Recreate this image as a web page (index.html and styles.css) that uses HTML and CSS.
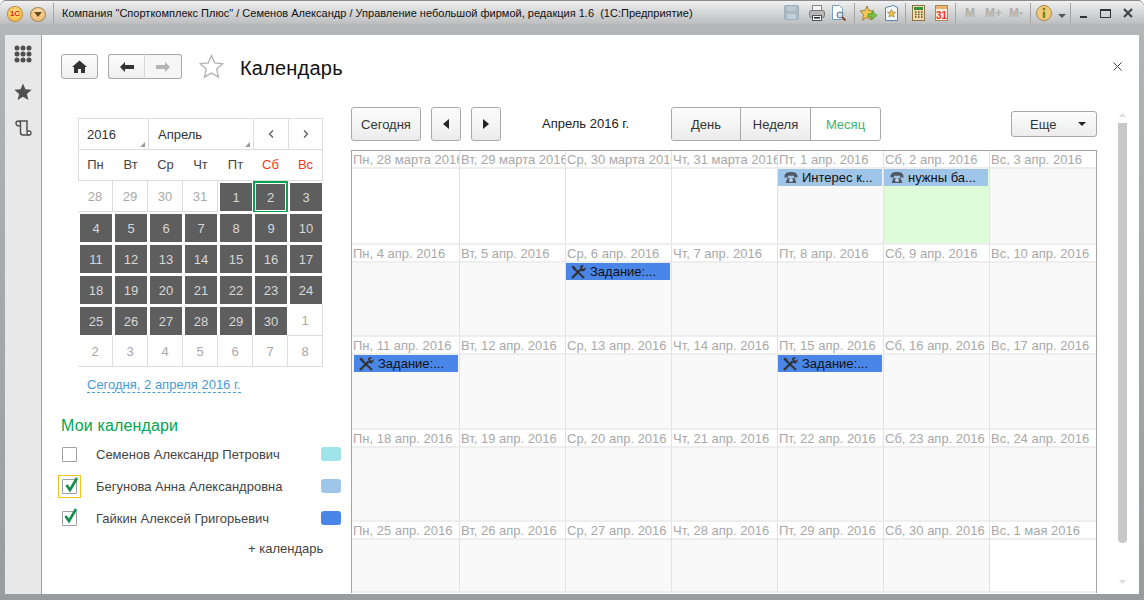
FILE: index.html
```html
<!DOCTYPE html>
<html lang="ru">
<head>
<meta charset="utf-8">
<title>Календарь</title>
<link rel="stylesheet" href="styles.css">
</head>
<body>
<div class="window">
  <header class="titlebar">
    <div class="tb-logo">1С</div>
    <div class="tb-menu"><svg width="8" height="5" viewBox="0 0 8 5"><path d="M0 0h8L4 5z" fill="#6b4a1a"/></svg></div>
    <div class="tb-sep tb-sep-first"></div>
    <div class="tb-title">Компания "Спорткомплекс Плюс" / Семенов Александр / Управление небольшой фирмой, редакция 1.6&nbsp; (1С:Предприятие)</div>
    <div class="tb-tools">
      <svg class="ti" width="16" height="16" viewBox="0 0 16 16"><rect x=".5" y=".5" width="14" height="14" rx="1" fill="#a9bac6" stroke="#9fb0bc"/><rect x="3" y="1" width="9" height="5" fill="#bcc8d0"/><rect x="3" y="9" width="9" height="5" fill="#c4ced6"/></svg>
      <svg class="ti ti-print" width="16" height="16" viewBox="0 0 16 16"><rect x="3.500" y=".5" width="9" height="5" fill="#f4f4f4" stroke="#888"/><rect x=".5" y="5.500" width="15" height="7" rx="2" fill="#b8b8b8" stroke="#777"/><rect x="3.500" y="10.500" width="9" height="5" fill="#fff" stroke="#555"/><rect x="5" y="12" width="6" height="1.500" fill="#222"/></svg>
      <svg class="ti ti-prev" width="16" height="16" viewBox="0 0 16 16"><path d="M1.500.5h7l3 3v11h-10z" fill="#fff" stroke="#7a9cc0"/><circle cx="9" cy="10" r="3" fill="#cfe3f2" stroke="#5a6d80"/><path d="M11 12l3.500 3.500" stroke="#7b4a20" stroke-width="2"/></svg>
      <span class="tb-sep"></span>
      <svg class="ti ti-fav" width="17" height="16" viewBox="0 0 17 16"><path d="M7 1l2 4.500 5 .5-3.500 3.500L11.500 15 7 12.500 2.500 15l1-5.500L0 6l5-.5z" fill="#f3c553" stroke="#8f7326" stroke-width=".8"/><path d="M8 9h4V6.500l5 4-5 4V12H8z" fill="#7cc24a" stroke="#4f8a2a" stroke-width=".7"/></svg>
      <svg class="ti ti-doc" width="13" height="16" viewBox="0 0 13 16"><path d="M.5 2.500l8-2 4 2v13h-12z" fill="#f2f5f8" stroke="#5f84a8"/><path d="M6.500 4.500l1.200 2.500 2.800.3-2 2 .5 2.700-2.500-1.300L4 12l.5-2.700-2-2 2.800-.3z" fill="#eec253" stroke="#8d7028" stroke-width=".6"/></svg>
      <span class="tb-sep"></span>
      <svg class="ti ti-calc" width="13" height="16" viewBox="0 0 13 16"><rect x=".5" y=".5" width="12" height="15" fill="#f4dca6" stroke="#8a744a"/><rect x="2" y="2" width="9" height="3" fill="#3f8f3f"/><path d="M3 7h1.500M6 7h1.500M9 7h1.500M3 9.500h1.500M6 9.500h1.500M9 9.500h1.500M3 12h1.500M6 12h1.500M9 12h1.500" stroke="#5a4a2a" stroke-width="1.400"/></svg>
      <svg class="ti ti-date" width="13" height="16" viewBox="0 0 13 16"><rect x=".5" y=".5" width="12" height="15" fill="#f8f0df" stroke="#a08a60"/><rect x="1" y="1" width="11" height="3" fill="#e9b46a"/><text x="6.500" y="14" class="ti-31">31</text></svg>
      <span class="tb-sep"></span>
      <span class="tm tm-m">M</span><span class="tm tm-mp">M+</span><span class="tm tm-mm">M-</span>
      <span class="tb-sep tb-sep-m"></span>
      <svg class="ti ti-info" width="16" height="16" viewBox="0 0 16 16"><circle cx="8" cy="8" r="7.500" fill="#f4c878" stroke="#a88a50"/><circle cx="8" cy="4" r="1.300" fill="#5f8f1f"/><rect x="6.800" y="6.500" width="2.400" height="6.500" rx=".5" fill="#5f8f1f"/></svg>
      <svg class="ti ti-drop" width="8" height="5" viewBox="0 0 8 5"><path d="M0 0h8L4 4z" fill="#555"/></svg>
      <span class="tb-sep tb-sep-w"></span>
      <span class="wb wb-min"></span>
      <span class="wb wb-max"></span>
      <svg class="wb-x" width="10" height="10" viewBox="0 0 10 10"><path d="M1 1l8 8M9 1l-8 8" stroke="#444" stroke-width="2.200"/></svg>
    </div>
  </header>

  <div class="client">
    <nav class="sidebar">
      <svg class="si si-grid" width="18" height="18" viewBox="0 0 18 18"><g fill="#505050"><circle cx="3" cy="3" r="2.500"/><circle cx="9" cy="3" r="2.500"/><circle cx="15" cy="3" r="2.500"/><circle cx="3" cy="9" r="2.500"/><circle cx="9" cy="9" r="2.500"/><circle cx="15" cy="9" r="2.500"/><circle cx="3" cy="15" r="2.500"/><circle cx="9" cy="15" r="2.500"/><circle cx="15" cy="15" r="2.500"/></g></svg>
      <svg class="si si-star" width="18" height="18" viewBox="0 0 18 18"><path d="M9 .5l2.400 5.800 6.300.5-4.800 4.100 1.500 6.100L9 13.700l-5.400 3.300 1.500-6.100L.3 6.800l6.300-.5z" fill="#505050"/></svg>
      <svg class="si si-scroll" width="17" height="16" viewBox="0 0 17 16"><path d="M5 6C2.500 6 1 5 1 3.200S2.200 1 3.500 1H12V11.500M3.500 1C5 1 5.500 2 5.500 3.500V12.500C5.500 14 6.500 15 8 15H14.500" fill="none" stroke="#505050" stroke-width="1.500"/><circle cx="14" cy="13" r="2" fill="#fff" stroke="#505050" stroke-width="1.300"/></svg>
    </nav>

    <main class="content">
      <div class="page-head">
        <button class="btn btn-home"><svg width="15" height="13" viewBox="0 0 15 13"><path d="M7.500.5L15 7h-2v6H9V9H6v4H2V7H0z" fill="#333"/></svg></button>
        <div class="nav-pair">
          <button class="btn btn-nav"><svg width="14" height="10" viewBox="0 0 14 10"><path d="M0 5l5-5v3h9v4H5v3z" fill="#333"/></svg></button>
          <button class="btn btn-nav btn-off"><svg width="14" height="10" viewBox="0 0 14 10"><path d="M14 5L9 0v3H0v4h9v3z" fill="#b4b4b4"/></svg></button>
        </div>
        <svg class="fav-star" width="25" height="25" viewBox="0 0 25 25"><path d="M12.500 1.500l3.200 7.500 8.100.7-6.100 5.400 1.800 8-7-4.200-7 4.200 1.800-8L1.200 9.700l8.100-.7z" fill="#fff" stroke="#b0b0b0" stroke-width="1.300"/></svg>
        <h1 class="page-title">Календарь</h1>
        <svg class="page-close" width="9" height="9" viewBox="0 0 9 9"><path d="M.5.500l8 8M8.500.500l-8 8" stroke="#444" stroke-width="1"/></svg>
      </div>

      <div class="columns">
        <aside class="left">
          <div class="mini">
            <div class="mini-top">
              <div class="mt mt-year">2016<i class="corner"></i></div>
              <div class="mt mt-month">Апрель<i class="corner"></i></div>
              <div class="mt mt-arrow"><svg width="6" height="8" viewBox="0 0 6 8"><path d="M5 .5L1.500 4 5 7.500" fill="none" stroke="#555" stroke-width="1.200"/></svg></div>
              <div class="mt mt-arrow mt-last"><svg width="6" height="8" viewBox="0 0 6 8"><path d="M1 .5L4.500 4 1 7.500" fill="none" stroke="#555" stroke-width="1.200"/></svg></div>
            </div>
            <div class="mini-grid">
              <div class="wd">Пн</div><div class="wd">Вт</div><div class="wd">Ср</div><div class="wd">Чт</div><div class="wd">Пт</div><div class="wd red">Сб</div><div class="wd red">Вс</div>
              <div class="d out">28</div><div class="d out">29</div><div class="d out">30</div><div class="d out">31</div><div class="d on">1</div><div class="d on cur">2</div><div class="d on">3</div>
              <div class="d on">4</div><div class="d on">5</div><div class="d on">6</div><div class="d on">7</div><div class="d on">8</div><div class="d on">9</div><div class="d on">10</div>
              <div class="d on">11</div><div class="d on">12</div><div class="d on">13</div><div class="d on">14</div><div class="d on">15</div><div class="d on">16</div><div class="d on">17</div>
              <div class="d on">18</div><div class="d on">19</div><div class="d on">20</div><div class="d on">21</div><div class="d on">22</div><div class="d on">23</div><div class="d on">24</div>
              <div class="d on">25</div><div class="d on">26</div><div class="d on">27</div><div class="d on">28</div><div class="d on">29</div><div class="d on">30</div><div class="d out">1</div>
              <div class="d out">2</div><div class="d out">3</div><div class="d out">4</div><div class="d out">5</div><div class="d out">6</div><div class="d out">7</div><div class="d out">8</div>
            </div>
          </div>
          <a class="today-link">Сегодня, 2 апреля 2016 г.</a>
          <h2 class="my-cal">Мои календари</h2>
          <ul class="cal-list">
            <li class="cal-row"><span class="cb-wrap"><span class="cb"></span></span><span class="cal-name">Семенов Александр Петрович</span><span class="swatch sw-teal"></span></li>
            <li class="cal-row"><span class="cb-wrap focus"><span class="cb"></span><svg class="tick" width="17" height="17" viewBox="0 0 17 17"><path d="M3.500 9l3.500 5 7-12" fill="none" stroke="#0f8f4a" stroke-width="2.600"/></svg></span><span class="cal-name">Бегунова Анна Александровна</span><span class="swatch sw-light"></span></li>
            <li class="cal-row"><span class="cb-wrap"><span class="cb"></span><svg class="tick" width="17" height="17" viewBox="0 0 17 17"><path d="M3.500 9l3.500 5 7-12" fill="none" stroke="#0f8f4a" stroke-width="2.600"/></svg></span><span class="cal-name">Гайкин Алексей Григорьевич</span><span class="swatch sw-blue"></span></li>
          </ul>
          <a class="add-cal">+ календарь</a>
        </aside>

        <section class="right">
          <div class="toolbar">
            <button class="tbtn tbtn-today">Сегодня</button>
            <button class="tbtn tbtn-sq"><svg width="6" height="10" viewBox="0 0 6 10"><path d="M6 0v10L0 5z" fill="#222"/></svg></button>
            <button class="tbtn tbtn-sq"><svg width="6" height="10" viewBox="0 0 6 10"><path d="M0 0v10l6-5z" fill="#222"/></svg></button>
            <span class="period">Апрель 2016 г.</span>
            <div class="seg">
              <button class="seg-b seg-day">День</button>
              <button class="seg-b seg-week">Неделя</button>
              <button class="seg-b seg-month">Месяц</button>
            </div>
            <button class="more">Еще<svg width="8" height="4" viewBox="0 0 8 4"><path d="M0 0h8L4 4z" fill="#222"/></svg></button>
          </div>

          <div class="month">
            <div class="c out first"><div class="h">Пн, 28 марта 2016</div></div>
            <div class="c out"><div class="h">Вт, 29 марта 2016</div></div>
            <div class="c out"><div class="h">Ср, 30 марта 2016</div></div>
            <div class="c out"><div class="h">Чт, 31 марта 2016</div></div>
            <div class="c"><div class="h">Пт, 1 апр. 2016</div><div class="ev ev-light"><svg class="ph" width="14" height="13" viewBox="0 0 14 13"><path d="M.5 5C1 1.500 4 1 7 1s6 .5 6.500 4v1.500H10V4.800H4v1.700H.5z" fill="#4f5a64"/><path d="M3.500 7h7l2 5h-11z" fill="#4f5a64"/><circle cx="7" cy="9" r="2" fill="#b8cfe4"/></svg>Интерес к...</div></div>
            <div class="c today"><div class="h">Сб, 2 апр. 2016</div><div class="ev ev-light"><svg class="ph" width="14" height="13" viewBox="0 0 14 13"><path d="M.5 5C1 1.500 4 1 7 1s6 .5 6.500 4v1.500H10V4.800H4v1.700H.5z" fill="#4f5a64"/><path d="M3.500 7h7l2 5h-11z" fill="#4f5a64"/><circle cx="7" cy="9" r="2" fill="#b8cfe4"/></svg>нужны ба...</div></div>
            <div class="c lastc"><div class="h">Вс, 3 апр. 2016</div></div>

            <div class="c first"><div class="h">Пн, 4 апр. 2016</div></div>
            <div class="c"><div class="h">Вт, 5 апр. 2016</div></div>
            <div class="c"><div class="h">Ср, 6 апр. 2016</div><div class="ev ev-blue"><svg class="tool" width="15" height="14" viewBox="0 0 15 14"><path d="M1 13L9.500 4.500" stroke="#333" stroke-width="2.400"/><path d="M9 1.500C10 .3 12 0 13 .6L11 2.600 12.500 4 14.500 2C15 3.500 14.500 5 13 6 12 6.500 11 6.500 10 6z" fill="#333"/><path d="M3 3.500L13 13" stroke="#333" stroke-width="2"/><path d="M.5 2L2 .5 5 3 3 5z" fill="#333"/></svg>Задание:...</div></div>
            <div class="c"><div class="h">Чт, 7 апр. 2016</div></div>
            <div class="c"><div class="h">Пт, 8 апр. 2016</div></div>
            <div class="c"><div class="h">Сб, 9 апр. 2016</div></div>
            <div class="c lastc"><div class="h">Вс, 10 апр. 2016</div></div>

            <div class="c first"><div class="h">Пн, 11 апр. 2016</div><div class="ev ev-blue"><svg class="tool" width="15" height="14" viewBox="0 0 15 14"><path d="M1 13L9.500 4.500" stroke="#333" stroke-width="2.400"/><path d="M9 1.500C10 .3 12 0 13 .6L11 2.600 12.500 4 14.500 2C15 3.500 14.500 5 13 6 12 6.500 11 6.500 10 6z" fill="#333"/><path d="M3 3.500L13 13" stroke="#333" stroke-width="2"/><path d="M.5 2L2 .5 5 3 3 5z" fill="#333"/></svg>Задание:...</div></div>
            <div class="c"><div class="h">Вт, 12 апр. 2016</div></div>
            <div class="c"><div class="h">Ср, 13 апр. 2016</div></div>
            <div class="c"><div class="h">Чт, 14 апр. 2016</div></div>
            <div class="c"><div class="h">Пт, 15 апр. 2016</div><div class="ev ev-blue"><svg class="tool" width="15" height="14" viewBox="0 0 15 14"><path d="M1 13L9.500 4.500" stroke="#333" stroke-width="2.400"/><path d="M9 1.500C10 .3 12 0 13 .6L11 2.600 12.500 4 14.500 2C15 3.500 14.500 5 13 6 12 6.500 11 6.500 10 6z" fill="#333"/><path d="M3 3.500L13 13" stroke="#333" stroke-width="2"/><path d="M.5 2L2 .5 5 3 3 5z" fill="#333"/></svg>Задание:...</div></div>
            <div class="c"><div class="h">Сб, 16 апр. 2016</div></div>
            <div class="c lastc"><div class="h">Вс, 17 апр. 2016</div></div>

            <div class="c first"><div class="h">Пн, 18 апр. 2016</div></div>
            <div class="c"><div class="h">Вт, 19 апр. 2016</div></div>
            <div class="c"><div class="h">Ср, 20 апр. 2016</div></div>
            <div class="c"><div class="h">Чт, 21 апр. 2016</div></div>
            <div class="c"><div class="h">Пт, 22 апр. 2016</div></div>
            <div class="c"><div class="h">Сб, 23 апр. 2016</div></div>
            <div class="c lastc"><div class="h">Вс, 24 апр. 2016</div></div>

            <div class="c first"><div class="h">Пн, 25 апр. 2016</div></div>
            <div class="c"><div class="h">Вт, 26 апр. 2016</div></div>
            <div class="c"><div class="h">Ср, 27 апр. 2016</div></div>
            <div class="c"><div class="h">Чт, 28 апр. 2016</div></div>
            <div class="c"><div class="h">Пт, 29 апр. 2016</div></div>
            <div class="c"><div class="h">Сб, 30 апр. 2016</div></div>
            <div class="c lastc out"><div class="h">Вс, 1 мая 2016</div></div>
          </div>

          <div class="scroll">
            <svg width="7" height="4" viewBox="0 0 7 4"><path d="M3.500 0L7 4H0z" fill="#ddd"/></svg>
            <div class="thumb"></div>
            <svg width="7" height="4" viewBox="0 0 7 4"><path d="M3.500 4L7 0H0z" fill="#ddd"/></svg>
          </div>
        </section>
      </div>
    </main>
  </div>
</div>
</body>
</html>
```

FILE: styles.css
```css
* { box-sizing: border-box; }
html, body { margin: 0; padding: 0; }
body { width: 1144px; height: 600px; overflow: hidden; background: #fff; font-family: "Liberation Sans", Arial, sans-serif; font-size: 13px; color: #333; }
button { font-family: inherit; margin: 0; padding: 0; cursor: default; }
h1, h2, ul { margin: 0; padding: 0; }
ul { list-style: none; }

.window { width: 1144px; height: 600px; display: flex; flex-direction: column; background: linear-gradient(#b4b5b7, #9a9b9d); border-radius: 6px 6px 0 0; }

/* title bar */
.titlebar { height: 35px; flex: none; display: flex; align-items: flex-start; padding: 0 11px 0 8px; border-radius: 6px 6px 0 0; border-top: 1px solid #8a8a8a; background: linear-gradient(#f1f1f1 0, #d8d9da 10px, #bfc0c2 22px, #b5b6b8 24px, #b4b5b7 35px); }
.tb-logo { width: 14px; height: 14px; margin-top: 6px; border-radius: 50%; background: radial-gradient(circle at 50% 40%, #ffe98a, #f4b53a 80%); box-shadow: 0 0 0 1px #b98a3a; color: #d8261c; font: bold 8px/14px "Liberation Sans", sans-serif; text-align: center; flex: none; }
.tb-menu { width: 16px; height: 15px; margin: 6px 0 0 8px; border-radius: 50%; background: radial-gradient(circle at 50% 30%, #fbe0b0, #eeb060); border: 1px solid #a98a5a; display: flex; align-items: center; justify-content: center; flex: none; }
.tb-sep { width: 1px; height: 20px; background: #a4a4a4; flex: none; }
.tb-sep-first { margin: 2px 0 0 7px; }
.tb-title { margin: 4px 0 0 8px; font-size: 11px; line-height: 17px; color: #111; white-space: nowrap; letter-spacing: .01px; flex: none; }
.tb-tools { display: flex; align-items: center; height: 24px; margin-left: auto; flex: none; }
.ti { flex: none; display: block; }
.ti-print { margin-left: 9px; }
.ti-prev { margin-left: 6px; }
.tb-tools .tb-sep { margin-left: 7px; }
.ti-fav { margin-left: 5px; }
.ti-doc { margin-left: 8px; }
.ti-calc { margin-left: 6px; }
.ti-date { margin-left: 10px; }
.ti-31 { font: bold 10px "Liberation Sans", sans-serif; fill: #e8331c; text-anchor: middle; }
.tm { font: bold 12px/14px "Liberation Sans", sans-serif; color: #b3aeaa; }
.tm-m { margin-left: 9px; }
.tm-mp { margin-left: 10px; }
.tm-mm { margin-left: 7px; }
.tb-tools .tb-sep-m { margin-left: 7px; }
.ti-info { margin-left: 5px; }
.ti-drop { margin: 6px 0 0 6px; }
.tb-tools .tb-sep-w { margin-left: 4px; }
.wb { flex: none; display: block; }
.wb-min { width: 7px; height: 2px; background: #333; margin: 8px 0 0 9px; }
.wb-max { width: 11px; height: 9px; border: 1px solid #333; border-top-width: 2px; margin-left: 13px; }
.wb-x { margin-left: 12px; flex: none; }

/* client */
.client { flex: none; height: 559px; margin: 0 5px; display: flex; background: #fff; }
.sidebar { width: 37px; flex: none; background: #e8e8e8; border-right: 1px solid #a0a0a0; display: flex; flex-direction: column; align-items: center; padding-top: 10px; }
.si { display: block; flex: none; }
.si-star { margin-top: 20px; }
.si-scroll { margin-top: 19px; }
.content { flex: 1; min-width: 0; display: flex; flex-direction: column; }

/* page head */
.page-head { height: 72px; flex: none; display: flex; align-items: flex-start; padding: 19px 0 0 19px; }
.btn { background: linear-gradient(#fdfdfd, #eee); border: 1px solid #a8a8a8; height: 25px; display: flex; align-items: center; justify-content: center; }
.btn-home { width: 37px; border-radius: 3px; }
.nav-pair { display: flex; margin-left: 10px; }
.btn-nav { width: 37px; border-radius: 3px 0 0 3px; border-right: 1px solid #d8d8d8; }
.btn-off { border-radius: 0 3px 3px 0; border-left: 0; border-right: 1px solid #a8a8a8; background: #f6f6f6; }
.fav-star { margin-left: 17px; display: block; flex: none; }
.page-title { margin: 0 0 0 16px; font-weight: normal; font-size: 20px; letter-spacing: .2px; line-height: 28px; color: #111; }
.page-close { margin: 8px 17px 0 auto; flex: none; }

.columns { flex: 1; display: flex; min-height: 0; }

/* left column */
.left { width: 309px; flex: none; display: flex; flex-direction: column; padding: 11px 0 0 19px; }
.mini { width: 245px; margin-left: 17px; border: 1px solid #ddd; flex: none; }
.mini-top { display: flex; height: 31px; border-bottom: 1px solid #ddd; }
.mt { position: relative; border-right: 1px solid #ddd; display: flex; align-items: center; height: 30px; font-size: 13px; color: #333; }
.mt-year { width: 70px; padding-left: 8px; }
.mt-month { width: 105px; padding-left: 9px; }
.mt-arrow { width: 35px; justify-content: center; }
.mt-last { border-right: 0; width: 33px; }
.corner { position: absolute; right: 3px; bottom: 2px; width: 0; height: 0; border-left: 5px solid transparent; border-bottom: 5px solid #999; }
.mini-grid { display: grid; grid-template-columns: repeat(7, 35px); grid-auto-rows: 31px; margin: 0 -1px -1px -1px; }
.wd { display: flex; align-items: center; justify-content: center; border-bottom: 1px solid #ddd; color: #444; font-size: 13px; padding-bottom: 1px; }
.red { color: #f03a17; }
.d { display: flex; align-items: center; justify-content: center; font-size: 13px; border: 1px solid #ddd; border-width: 0 1px 1px 0; }
.d.out { color: #a9a9a9; background: #fff; }
.d.on { background: #5e5e5e; background-clip: padding-box; color: #d8d8d8; border-style: solid; border-color: #fff; border-width: 2px 1px 1px 2px; }
.d.on.cur { border: 0; margin: 0 0 -1px 0; background-clip: border-box; box-shadow: inset 0 0 0 2px #00a650, inset 0 0 0 3px #fff; }
.today-link { margin: 11px 0 0 26px; font-size: 13px; line-height: 14px; color: #4a9ad4; border-bottom: 1px dashed #4a9ad4; align-self: flex-start; }
.my-cal { margin: 23px 0 0; font-weight: normal; font-size: 16px; letter-spacing: .15px; line-height: 20px; color: #00a650; }
.cal-list { margin-top: 2px; }
.cal-row { display: flex; align-items: center; height: 32px; }
.cb-wrap { position: relative; width: 23px; height: 23px; margin-left: -3px; display: flex; align-items: center; justify-content: center; flex: none; }
.cb-wrap.focus { border: 1px solid #f3c224; }
.cb { width: 15px; height: 15px; border: 1px solid #a0a0a0; border-radius: 1px; background: #fff; display: block; }
.tick { position: absolute; left: 4px; top: 0; }
.cal-name { margin-left: 15px; color: #444; font-size: 13px; white-space: nowrap; flex: none; width: 225px; }
.swatch { width: 20px; height: 14px; border-radius: 3px; flex: none; }
.sw-teal { background: #a0e3e8; }
.sw-light { background: #9fc5e8; }
.sw-blue { background: #4a86e8; }
.add-cal { margin: 8px 0 0 187px; font-size: 13px; line-height: 14px; color: #444; white-space: nowrap; }

/* right column */
.right { flex: 1; min-width: 0; display: grid; grid-template-columns: 746px 1fr; grid-template-rows: 43px 1fr; }
.toolbar { grid-column: 1; grid-row: 1; display: flex; align-items: flex-start; }
.tbtn { height: 34px; border: 1px solid #a8a8a8; border-radius: 3px; background: linear-gradient(#fdfdfd, #ececec); color: #333; font-size: 13px; display: flex; align-items: center; justify-content: center; flex: none; }
.tbtn-today { width: 70px; }
.tbtn-sq { width: 30px; margin-left: 10px; }
.period { margin: 0 0 0 41px; line-height: 34px; color: #222; font-size: 13px; width: 129px; flex: none; white-space: nowrap; }
.seg { display: flex; height: 34px; border: 1px solid #a8a8a8; border-radius: 3px; flex: none; width: 210px; overflow: hidden; }
.seg-b { border: 0; border-right: 1px solid #a8a8a8; background: linear-gradient(#fdfdfd, #ececec); font-size: 13px; color: #333; height: 32px; }
.seg-day { width: 69px; }
.seg-week { width: 70px; }
.seg-month { flex: 1; border-right: 0; background: #fff; color: #3fb36f; }
.more { width: 86px; height: 26px; margin: 4px 0 0 130px; border: 1px solid #a8a8a8; border-radius: 3px; background: linear-gradient(#fdfdfd, #ececec); color: #333; font-size: 13px; display: flex; align-items: center; flex: none; padding-left: 18px; }
.more svg { margin-left: 22px; }

.month { grid-column: 1; grid-row: 2; height: 443px; width: 746px; border: 1px solid #a0a0a0; border-bottom: 0; display: grid; grid-template-columns: 108px repeat(6, 106px); grid-template-rows: 94px 92px 93px 92px 71px; background: #f9f9f9; }
.c { border-right: 1px solid #e2e2e2; border-bottom: 2px solid #eee; min-width: 0; display: flex; flex-direction: column; overflow: hidden; }
.c.lastc { border-right: 0; }
.c.out { background: #fff; }
.c.today { background: #dffcd8; }
.h { height: 18px; flex: none; background: #fff; border-bottom: 2px solid #eee; padding-left: 1px; line-height: 17px; color: #a8a8a8; font-size: 13px; white-space: nowrap; overflow: hidden; }
.ev { height: 17px; margin-right: 1px; color: #111; font-size: 13px; line-height: 17px; white-space: nowrap; overflow: hidden; display: flex; align-items: center; flex: none; }
.first .ev { margin-left: 2px; }
.ev-light { background: #9fc5e8; }
.ev-blue { background: #4a86e8; }
.ph { margin: 0 4px 0 6px; flex: none; }
.tool { margin: 0 4px 0 5px; flex: none; }

.scroll { grid-column: 2; grid-row: 1 / span 2; width: 9px; margin: 6px 0 0 21px; height: 476px; display: flex; flex-direction: column; align-items: center; }
.scroll .thumb { width: 9px; height: 420px; margin: 6px 0 37px; border-radius: 0 0 4px 4px; background: #c8c8c8; flex: none; }
.scroll svg { flex: none; }
```
